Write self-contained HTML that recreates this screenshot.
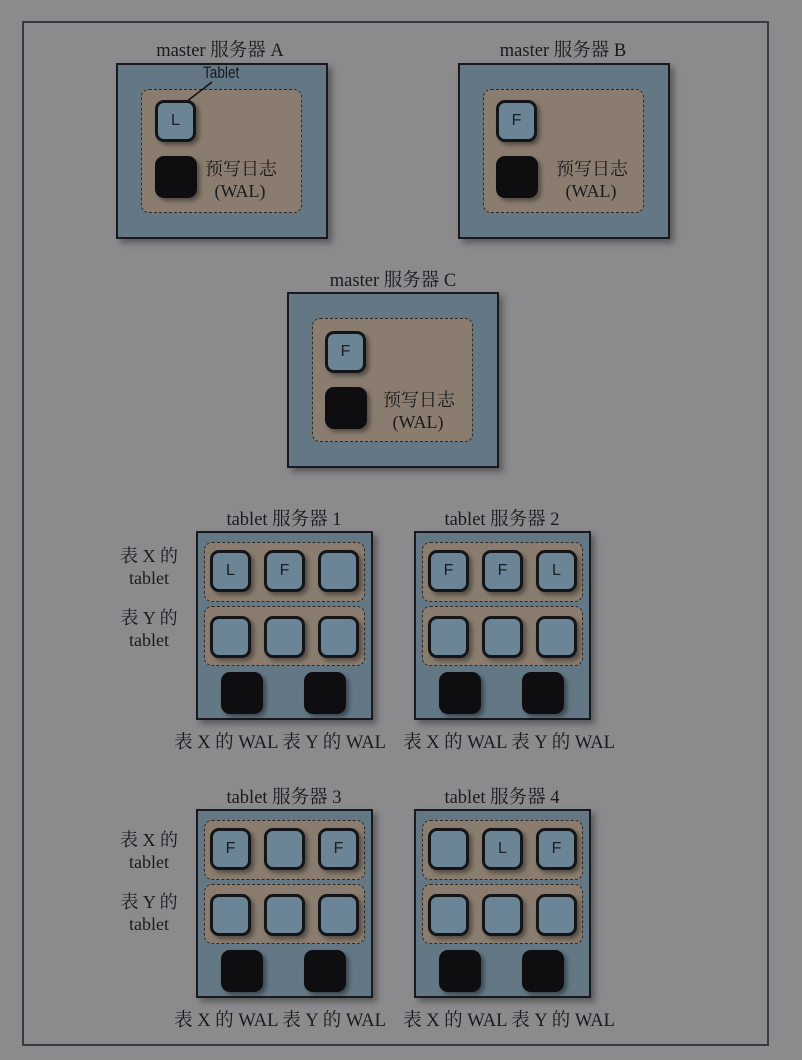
<!DOCTYPE html>
<html><head><meta charset="utf-8"><style>
body{margin:0;width:802px;height:1060px;background:#8b8b8d;position:relative;overflow:hidden;font-family:"Liberation Serif","Noto Serif CJK SC",serif;color:#1a1a1e}
.a{position:absolute}
.frame{left:22px;top:21px;width:743px;height:1021px;border:2px solid #3a3a3e}
.box{position:absolute;background:#637785;border:2px solid #17191c;box-shadow:4px 4px 6px rgba(0,0,0,.35);box-sizing:border-box}
.in{position:absolute;background:#8a7d6f;border:1.5px dashed #2a2a2a;border-radius:8px;box-sizing:border-box}
.t{position:absolute;width:41px;height:42px;box-sizing:border-box;background:#6b8596;border:3px solid #141518;border-radius:9px;box-shadow:3px 3px 4px rgba(0,0,0,.4);font-family:"Liberation Sans",sans-serif;font-size:16px;line-height:36px;text-align:center;color:#1a1d24}
.k{position:absolute;width:42px;height:42px;background:#0e0e10;border-radius:9px;box-shadow:3px 3px 4px rgba(0,0,0,.4)}
.ttl{position:absolute;font-size:18.5px;text-align:center;width:240px;white-space:nowrap}
.lab{position:absolute;font-size:18px;text-align:center;width:70px;line-height:22px;white-space:nowrap}
.srv{position:absolute;width:177px;height:189px}
</style></head><body>
<div class="a frame"></div>

<div class="ttl" style="left:100px;top:36px">master 服务器 A</div>
<div class="box" style="left:116px;top:63px;width:212px;height:176px"></div>
<div class="in" style="left:141px;top:89px;width:161px;height:124px"></div>
<div class="a" style="left:203px;top:63px;font-family:'Liberation Sans',sans-serif;font-size:17px;transform:scaleX(.8);transform-origin:left">Tablet</div>
<svg class="a" style="left:180px;top:80px" width="40" height="25"><line x1="32" y1="2" x2="6" y2="22" stroke="#111" stroke-width="1.5"/></svg>
<div class="t" style="left:155px;top:100px">L</div>
<div class="k" style="left:155px;top:156px"></div>
<div class="lab" style="left:205px;top:158px;width:70px">预写日志<br>(WAL)</div>

<div class="ttl" style="left:443px;top:36px">master 服务器 B</div>
<div class="box" style="left:458px;top:63px;width:212px;height:176px"></div>
<div class="in" style="left:483px;top:89px;width:161px;height:124px"></div>
<div class="t" style="left:496px;top:100px">F</div>
<div class="k" style="left:496px;top:156px"></div>
<div class="lab" style="left:556px;top:158px;width:70px">预写日志<br>(WAL)</div>

<div class="ttl" style="left:273px;top:266px">master 服务器 C</div>
<div class="box" style="left:287px;top:292px;width:212px;height:176px"></div>
<div class="in" style="left:312px;top:318px;width:161px;height:124px"></div>
<div class="t" style="left:325px;top:331px">F</div>
<div class="k" style="left:325px;top:387px"></div>
<div class="lab" style="left:383px;top:389px;width:70px">预写日志<br>(WAL)</div>

<!-- server 1 -->
<div class="ttl" style="left:164px;top:505px">tablet 服务器 1</div>
<div class="lab" style="left:114px;top:545px">表 X 的<br>tablet</div>
<div class="lab" style="left:114px;top:607px">表 Y 的<br>tablet</div>
<div class="srv" style="left:196px;top:531px">
<div class="box" style="left:0;top:0;width:177px;height:189px"></div>
<div class="in" style="left:8px;top:11px;width:161px;height:60px"></div>
<div class="in" style="left:8px;top:75px;width:161px;height:60px"></div>
<div class="t" style="left:14px;top:19px">L</div><div class="t" style="left:68px;top:19px">F</div><div class="t" style="left:122px;top:19px"></div>
<div class="t" style="left:14px;top:85px"></div><div class="t" style="left:68px;top:85px"></div><div class="t" style="left:122px;top:85px"></div>
<div class="k" style="left:25px;top:141px"></div><div class="k" style="left:108px;top:141px"></div>
</div>
<div class="ttl" style="left:160px;top:728px">表 X 的 WAL 表 Y 的 WAL</div>

<!-- server 2 -->
<div class="ttl" style="left:382px;top:505px">tablet 服务器 2</div>
<div class="srv" style="left:414px;top:531px">
<div class="box" style="left:0;top:0;width:177px;height:189px"></div>
<div class="in" style="left:8px;top:11px;width:161px;height:60px"></div>
<div class="in" style="left:8px;top:75px;width:161px;height:60px"></div>
<div class="t" style="left:14px;top:19px">F</div><div class="t" style="left:68px;top:19px">F</div><div class="t" style="left:122px;top:19px">L</div>
<div class="t" style="left:14px;top:85px"></div><div class="t" style="left:68px;top:85px"></div><div class="t" style="left:122px;top:85px"></div>
<div class="k" style="left:25px;top:141px"></div><div class="k" style="left:108px;top:141px"></div>
</div>
<div class="ttl" style="left:389px;top:728px">表 X 的 WAL 表 Y 的 WAL</div>

<!-- server 3 -->
<div class="ttl" style="left:164px;top:783px">tablet 服务器 3</div>
<div class="lab" style="left:114px;top:829px">表 X 的<br>tablet</div>
<div class="lab" style="left:114px;top:891px">表 Y 的<br>tablet</div>
<div class="srv" style="left:196px;top:809px">
<div class="box" style="left:0;top:0;width:177px;height:189px"></div>
<div class="in" style="left:8px;top:11px;width:161px;height:60px"></div>
<div class="in" style="left:8px;top:75px;width:161px;height:60px"></div>
<div class="t" style="left:14px;top:19px">F</div><div class="t" style="left:68px;top:19px"></div><div class="t" style="left:122px;top:19px">F</div>
<div class="t" style="left:14px;top:85px"></div><div class="t" style="left:68px;top:85px"></div><div class="t" style="left:122px;top:85px"></div>
<div class="k" style="left:25px;top:141px"></div><div class="k" style="left:108px;top:141px"></div>
</div>
<div class="ttl" style="left:160px;top:1006px">表 X 的 WAL 表 Y 的 WAL</div>

<!-- server 4 -->
<div class="ttl" style="left:382px;top:783px">tablet 服务器 4</div>
<div class="srv" style="left:414px;top:809px">
<div class="box" style="left:0;top:0;width:177px;height:189px"></div>
<div class="in" style="left:8px;top:11px;width:161px;height:60px"></div>
<div class="in" style="left:8px;top:75px;width:161px;height:60px"></div>
<div class="t" style="left:14px;top:19px"></div><div class="t" style="left:68px;top:19px">L</div><div class="t" style="left:122px;top:19px">F</div>
<div class="t" style="left:14px;top:85px"></div><div class="t" style="left:68px;top:85px"></div><div class="t" style="left:122px;top:85px"></div>
<div class="k" style="left:25px;top:141px"></div><div class="k" style="left:108px;top:141px"></div>
</div>
<div class="ttl" style="left:389px;top:1006px">表 X 的 WAL 表 Y 的 WAL</div>
</body></html>
